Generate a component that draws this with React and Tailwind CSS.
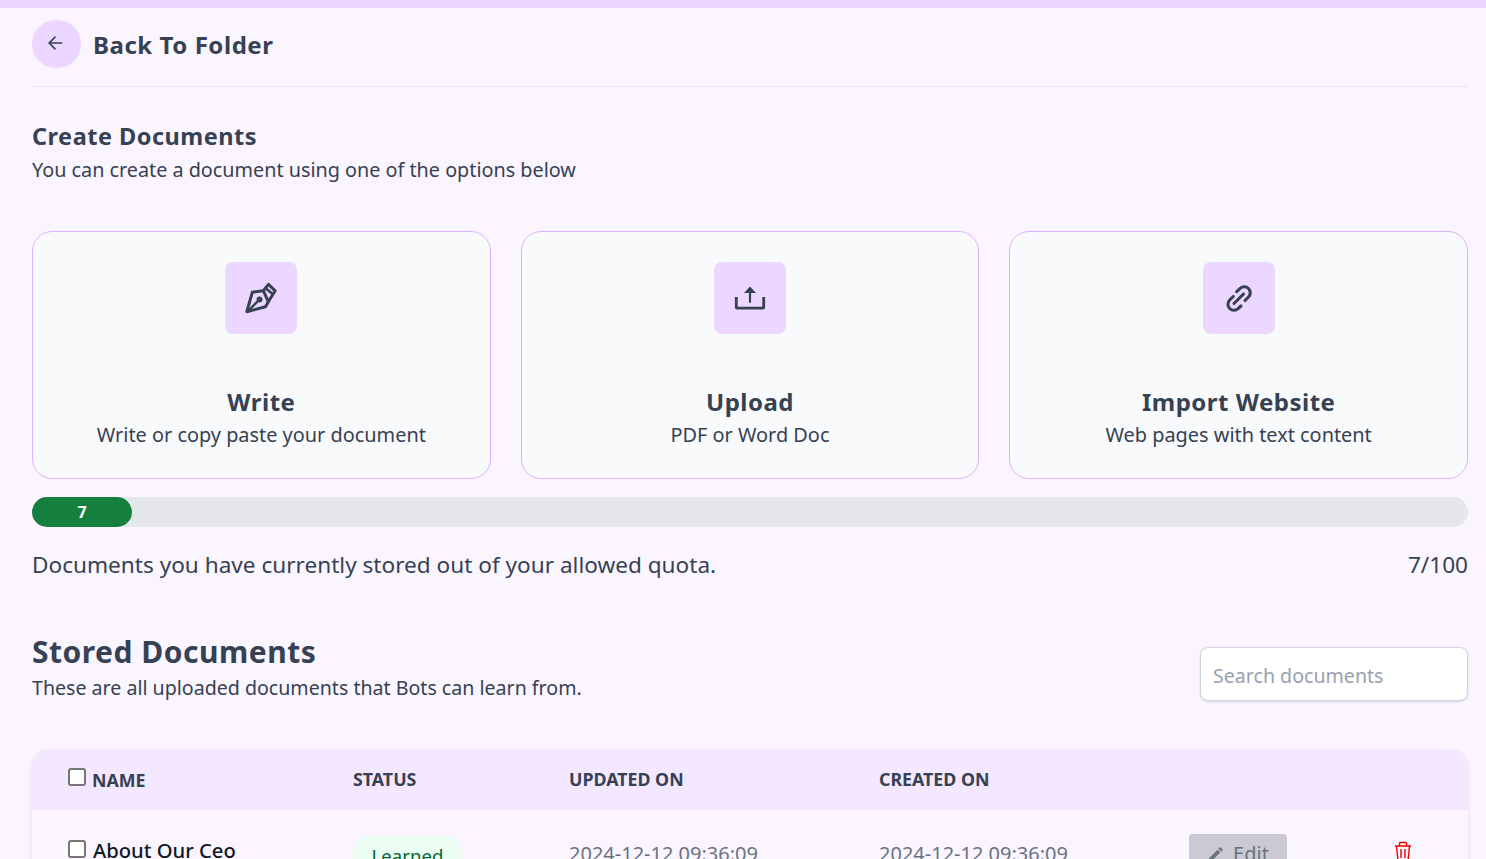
import React from "react";

const PenIcon = () => (
  <svg width="32" height="32" viewBox="0 0 32 32" fill="none" stroke="#374151" strokeWidth="3" strokeLinejoin="round" strokeLinecap="round">
    <path d="M1.8 29.7 L7.3 10.3 L18.3 8.7 L23.3 19.7 L20.5 24.7 Z" />
    <path d="M18.3 8.7 L23.5 2.4 L30.2 8.8 L23.3 19.7" />
    <path d="M20.5 6 L27.5 12" strokeWidth="2.6" />
    <path d="M3 29 L13.5 18.5" strokeWidth="2.4" />
    <circle cx="14.5" cy="17.5" r="1.5" fill="#374151" />
  </svg>
);

const UploadIcon = () => (
  <svg width="32" height="32" viewBox="0 0 32 32" fill="none" stroke="#374151" strokeWidth="2.8" strokeLinejoin="round">
    <path d="M2.3 15 V25.5 Q2.3 26.2 3 26.2 H29 Q29.7 26.2 29.7 25.5 V15" />
    <path d="M16 4.5 L10 11 H22 Z" fill="#374151" strokeWidth="0" />
    <path d="M16 10.5 V20.7" strokeWidth="2.2" />
  </svg>
);

const LinkIcon = () => (
  <svg width="32" height="32" viewBox="0 0 32 32" fill="none" stroke="#374151" strokeWidth="3.1" strokeLinecap="round" strokeLinejoin="round">
    <path d="M13.7 9.7 L17 6.5 a6 6 0 0 1 8.5 8.5 L22 18.5" />
    <path d="M10.3 14.5 L6.7 18 a6 6 0 0 0 8.5 8.5 L18 24" />
    <path d="M11 21.5 L20.5 12" />
  </svg>
);

const ArrowBack = () => (
  <svg width="16" height="16" viewBox="0 0 16 16" fill="none" stroke="#374151" strokeWidth="1.7" strokeLinecap="round" strokeLinejoin="round">
    <path d="M14.5 8 H2.5" />
    <path d="M8 2.2 L2.2 8 L8 13.8" />
  </svg>
);

const Card = ({ icon, title, sub }) => (
  <div className="h-[248px] rounded-[20px] border border-purple-300 bg-gray-50 flex flex-col items-center pt-[30px]">
    <div className="w-[72px] h-[72px] rounded-lg bg-[#ebd7ff] flex items-center justify-center">{icon}</div>
    <div className="mt-[50px] text-[24px] leading-9 font-bold text-gray-700 tracking-[0.5px]">{title}</div>
    <div className="mt-[1px] text-[19.9px] leading-7 text-gray-700">{sub}</div>
  </div>
);

const Check = () => (
  <span className="w-[18px] h-[18px] rounded-[3px] border-2 border-[#767676] bg-white shrink-0 inline-block" />
);

export default function App() {
  return (
    <div className="h-screen overflow-hidden bg-purple-50 font-['Noto_Sans','Open_Sans',sans-serif] text-gray-700">
      <div className="h-2 bg-[#ebd7ff]" />
      <div className="pl-8 pr-[18px]">
        <div className="flex items-center gap-3 pt-3 pb-[18px] border-b border-gray-200">
          <div className="w-[49px] h-12 rounded-full bg-[#ebd7ff] flex items-center justify-center">
            <span className="-mt-[2px] -ml-[3px]"><ArrowBack /></span>
          </div>
          <div className="mt-[2px] text-[24px] leading-8 font-bold tracking-[0.55px]">Back To Folder</div>
        </div>

        <h2 className="mt-[35px] text-[23.5px] leading-7 font-bold tracking-[0.5px]">Create Documents</h2>
        <p className="mt-[6px] text-[19.8px] leading-7">You can create a document using one of the options below</p>

        <div className="mt-[47px] grid grid-cols-3 gap-[30px]">
          <Card icon={<PenIcon />} title="Write" sub="Write or copy paste your document" />
          <Card icon={<UploadIcon />} title="Upload" sub="PDF or Word Doc" />
          <Card icon={<LinkIcon />} title="Import Website" sub="Web pages with text content" />
        </div>

        <div className="mt-[18px] h-[30px] rounded-full bg-gray-200">
          <div className="h-full w-[100px] rounded-full bg-[#15803d] flex items-center justify-center text-white text-[16px] font-bold">7</div>
        </div>

        <div className="mt-[22px] flex justify-between text-[22.6px] leading-8">
          <span>Documents you have currently stored out of your allowed quota.</span>
          <span>7/100</span>
        </div>

        <div className="mt-[53px] flex justify-between items-end">
          <div>
            <h2 className="text-[30px] leading-9 font-bold tracking-[0.5px]">Stored Documents</h2>
            <p className="mt-1 text-[19.6px] leading-7">These are all uploaded documents that Bots can learn from.</p>
          </div>
          <input
            placeholder="Search documents"
            className="w-[268px] h-[54px] mb-px px-3 pt-[2px] rounded-lg border border-gray-300 bg-white shadow-sm text-[19.6px] outline-none placeholder:text-gray-400"
          />
        </div>

        <div className="mt-[47px] rounded-t-2xl shadow-md bg-purple-50">
          <div className="h-[61px] rounded-t-2xl bg-[#f3e8ff] grid grid-cols-[285px_216px_310px_310px_1fr] pl-9 items-center text-[17.8px] font-bold">
            <div className="flex items-center gap-[6px]"><span className="-mt-[5px] flex"><Check /></span><span className="mt-[2px]">NAME</span></div>
            <div>STATUS</div>
            <div>UPDATED ON</div>
            <div>CREATED ON</div>
            <div />
          </div>
          <div className="h-[80px] grid grid-cols-[285px_216px_310px_310px_1fr] pl-9 pt-6 items-start">
            <div className="flex items-start gap-[7px] pt-[2px]">
              <span className="mt-[4px] flex"><Check /></span>
              <span className="text-[20.2px] leading-7 font-medium text-gray-900">About Our Ceo</span>
            </div>
            <div className="mt-[2px] w-[109px] h-[40px] rounded-2xl bg-[#ecfdf3] flex items-center justify-center text-[18.6px] text-green-800">Learned</div>
            <div className="mt-[6px] text-[20px] leading-7 text-gray-500">2024-12-12 09:36:09</div>
            <div className="mt-[6px] text-[20px] leading-7 text-gray-500">2024-12-12 09:36:09</div>
            <div className="flex items-start">
              <div className="w-[98px] h-10 rounded bg-[#cbc9d3] text-gray-500 text-[20px] flex items-center justify-center gap-2">
                <svg width="18" height="18" viewBox="0 0 24 24" fill="#6b7280"><path d="M3 17.25V21h3.75L17.81 9.94l-3.75-3.75L3 17.25zM20.71 7.04a1 1 0 0 0 0-1.41l-2.34-2.34a1 1 0 0 0-1.41 0l-1.83 1.83 3.75 3.75 1.83-1.83z" /></svg>
                Edit
              </div>
              <div className="ml-[106px] mt-[7px]">
                <svg width="20" height="22" viewBox="0 0 20 22" fill="none" stroke="#ef0000" strokeWidth="1.4">
                  <path d="M2 5 H18 M6.5 5 V2.5 Q6.5 1.5 7.5 1.5 H12.5 Q13.5 1.5 13.5 2.5 V5 M3.5 5 L5 20 H15 L16.5 5 M8 8 V17 M12 8 V17" />
                </svg>
              </div>
            </div>
          </div>
        </div>
      </div>
    </div>
  );
}
